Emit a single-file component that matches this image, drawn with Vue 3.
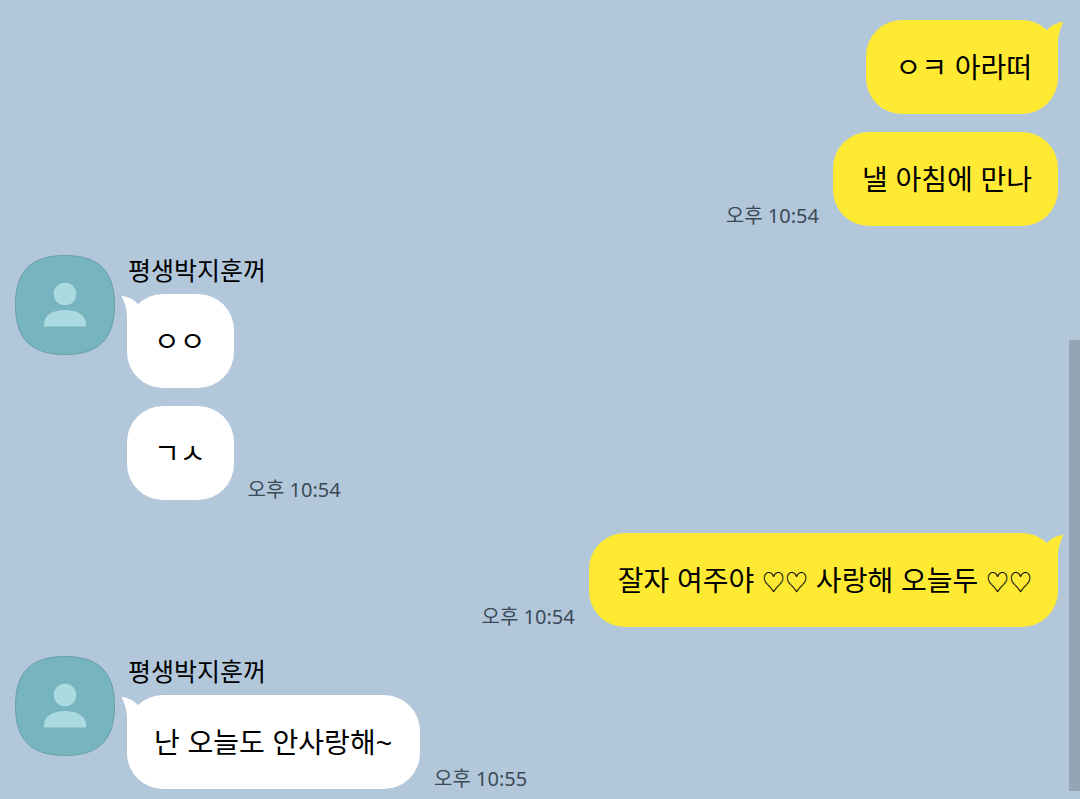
<script setup>
const groups = [
  {
    mine: true,
    messages: [{ text: 'ㅇㅋ 아라떠' }, { text: '낼 아침에 만나', time: '오후 10:54' }],
  },
  {
    mine: false,
    name: '평생박지훈꺼',
    messages: [{ text: 'ㅇㅇ' }, { text: 'ㄱㅅ', time: '오후 10:54' }],
  },
  {
    mine: true,
    messages: [{ text: '잘자 여주야 ♡♡ 사랑해 오늘두 ♡♡', time: '오후 10:54' }],
  },
  {
    mine: false,
    name: '평생박지훈꺼',
    messages: [{ text: '난 오늘도 안사랑해~', time: '오후 10:55' }],
  },
]

const splitHearts = (text) => text.split(/(♡+)/).filter(Boolean)
</script>

<template>
  <main class="chat">
    <section
      v-for="(group, g) in groups"
      :key="g"
      class="group"
      :class="group.mine ? 'mine' : 'theirs'"
    >
      <svg v-if="!group.mine" class="avatar" viewBox="0 0 100 100" aria-hidden="true">
        <path
          d="M50 .5C84 .5 99.500 16 99.500 50S84 99.500 50 99.500S.5 84 .5 50S16 .5 50 .5Z"
          fill="#76b4bf"
          stroke="#699fac"
        />
        <circle cx="50" cy="39" r="11.300" fill="#acdae1" />
        <path d="M29 71.500V69C29 60 38 55 50 55S71 60 71 69V71.500Z" fill="#acdae1" />
      </svg>
      <div class="thread">
        <h2 v-if="group.name" class="name">{{ group.name }}</h2>
        <div class="messages">
          <div v-for="(message, m) in group.messages" :key="m" class="row">
            <p class="bubble">
              <span
                v-for="(part, p) in splitHearts(message.text)"
                :key="p"
                :class="{ hearts: part.startsWith('♡') }"
              >{{ part }}</span>
              <svg v-if="m === 0" class="tail" viewBox="0 0 24 36" aria-hidden="true">
                <path d="M7 10C11 6 16 2.500 23.500 2C20 9 18 15 18 24V36L5 14Z" />
              </svg>
            </p>
            <time v-if="message.time" class="time">{{ message.time }}</time>
          </div>
        </div>
      </div>
    </section>
    <div class="scroll-thumb"></div>
  </main>
</template>

<style>
body {
  margin: 0;
  background: #b2c7da;
}
</style>

<style scoped>
.chat {
  position: relative;
  box-sizing: border-box;
  min-height: 100vh;
  padding: 20px 22px 10px 15px;
  background: #b2c7da;
  color: #000;
  font-family: "Liberation Sans", "Noto Sans CJK KR", sans-serif;
}
.group {
  display: flex;
  align-items: flex-start;
  gap: 12px;
}
.mine {
  justify-content: flex-end;
}
.theirs {
  margin-top: 29px;
}
.theirs + .mine {
  margin-top: 33px;
}
.avatar {
  flex: none;
  width: 100px;
  height: 100px;
}
.name {
  margin: 0;
  padding-left: 1px;
  height: 39px;
  font-size: 25px;
  line-height: 32px;
  font-weight: 400;
}
.messages {
  display: flex;
  flex-direction: column;
  gap: 18px;
}
.row {
  display: flex;
  align-items: flex-end;
  gap: 14px;
}
.mine .row {
  flex-direction: row-reverse;
}
.bubble {
  position: relative;
  margin: 0;
  padding: 29px 28px 25px 27px;
  border-radius: 36px;
  font-size: 28px;
  line-height: 40px;
  background: #fff;
}
.mine .bubble {
  padding-right: 26px;
  padding-left: 29px;
  background: #ffea33;
}
.hearts {
  font-family: "Noto Sans CJK KR", sans-serif;
  font-size: 23px;
  font-weight: 500;
  line-height: 1;
}
.tail {
  position: absolute;
  top: 0;
  right: -6px;
  width: 24px;
  height: 36px;
  fill: #ffea33;
}
.theirs .tail {
  right: auto;
  left: -6px;
  transform: scaleX(-1);
  fill: #fff;
}
.time {
  font-family: "Noto Sans", "Noto Sans CJK KR", sans-serif;
  font-size: 20px;
  line-height: 20px;
  font-weight: 400;
  color: #3b4a57;
}
.scroll-thumb {
  position: absolute;
  top: 340px;
  right: 0;
  bottom: 8px;
  width: 11px;
  background: #94a5b3;
}
</style>
